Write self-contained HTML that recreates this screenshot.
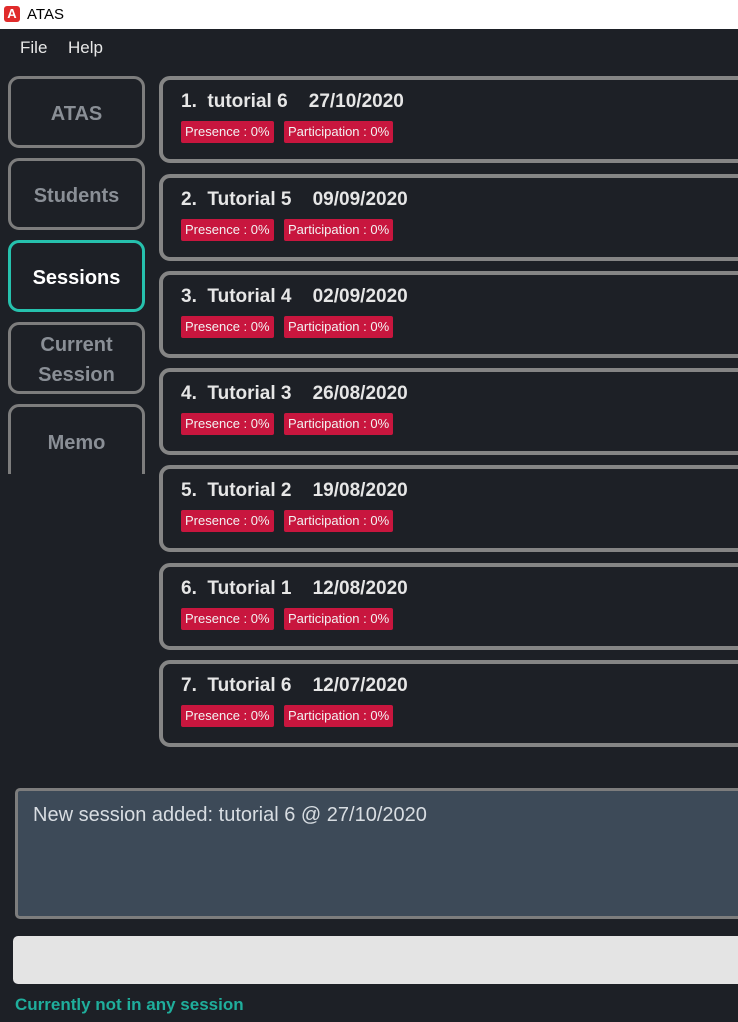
<!DOCTYPE html>
<html><head><meta charset="utf-8"><style>
*{box-sizing:border-box;margin:0;padding:0}
body{width:738px;height:1022px;overflow:hidden;background:#1d2026;font-family:"Liberation Sans",sans-serif;position:relative}
.title{position:absolute;left:0;top:0;width:738px;height:29px;background:#fff;}
.title .ic{position:absolute;left:4px;top:6px;width:16px;height:16px;background:#e02b2b;border-radius:3px;color:#fff;font-weight:bold;font-size:13px;text-align:center;line-height:16px}
.title span{position:absolute;left:27px;top:6px;font-size:15px;color:#000}
.menu{position:absolute;top:38px;font-size:17px;color:#e8e8e8}
.nav{position:absolute;left:8px;width:137px;height:72px;border:3px solid #7d7d7d;border-radius:11px;color:#8a8f96;font-weight:bold;font-size:20px;display:flex;align-items:center;justify-content:center;text-align:center;line-height:30px;padding-top:4px}
.nav.act{border-color:#26c1ad;color:#fff}
.card{position:absolute;left:159px;width:620px;height:87px;border:4px solid #858585;border-radius:11px}
.card .t{position:absolute;left:18px;top:11px;font-size:19px;font-weight:bold;color:#e6e6e6;white-space:pre}
.tag{position:absolute;top:41px;height:22px;background:#c8163e;color:#f2f2f2;font-size:13px;line-height:22px;padding:0 4px;border-radius:2px}
.res{position:absolute;left:15px;top:788px;width:740px;height:131px;background:#3d4a58;border:3px solid #7d7d7d;border-radius:5px;color:#d8dde2;font-size:20px;padding:13px 15px}
.inp{position:absolute;left:13px;top:936px;width:740px;height:48px;background:#e4e4e4;border-radius:5px}
.st{position:absolute;left:15px;top:995px;color:#1fae9c;font-weight:bold;font-size:17px}
</style></head><body>
<div class="title"><div class="ic">A</div><span>ATAS</span></div>
<div class="menu" style="left:20px">File</div><div class="menu" style="left:68px">Help</div>
<div class="nav" style="top:76px">ATAS</div>
<div class="nav" style="top:158px">Students</div>
<div class="nav act" style="top:240px">Sessions</div>
<div class="nav" style="top:322px">Current<br>Session</div>
<div class="nav" style="top:404px;height:80px;clip-path:inset(0 0 10px 0)"><span style="margin-top:-6px">Memo</span></div>

<div class="card" style="top:76px"><div class="t">1.  tutorial 6    27/10/2020</div><div class="tag" style="left:18px">Presence : 0%</div><div class="tag" style="left:121px">Participation : 0%</div></div>
<div class="card" style="top:174px"><div class="t">2.  Tutorial 5    09/09/2020</div><div class="tag" style="left:18px">Presence : 0%</div><div class="tag" style="left:121px">Participation : 0%</div></div>
<div class="card" style="top:271px"><div class="t">3.  Tutorial 4    02/09/2020</div><div class="tag" style="left:18px">Presence : 0%</div><div class="tag" style="left:121px">Participation : 0%</div></div>
<div class="card" style="top:368px"><div class="t">4.  Tutorial 3    26/08/2020</div><div class="tag" style="left:18px">Presence : 0%</div><div class="tag" style="left:121px">Participation : 0%</div></div>
<div class="card" style="top:465px"><div class="t">5.  Tutorial 2    19/08/2020</div><div class="tag" style="left:18px">Presence : 0%</div><div class="tag" style="left:121px">Participation : 0%</div></div>
<div class="card" style="top:563px"><div class="t">6.  Tutorial 1    12/08/2020</div><div class="tag" style="left:18px">Presence : 0%</div><div class="tag" style="left:121px">Participation : 0%</div></div>
<div class="card" style="top:660px"><div class="t">7.  Tutorial 6    12/07/2020</div><div class="tag" style="left:18px">Presence : 0%</div><div class="tag" style="left:121px">Participation : 0%</div></div>

<div class="res">New session added: tutorial 6 @ 27/10/2020</div>
<div class="inp"></div>
<div class="st">Currently not in any session</div>
</body></html>
